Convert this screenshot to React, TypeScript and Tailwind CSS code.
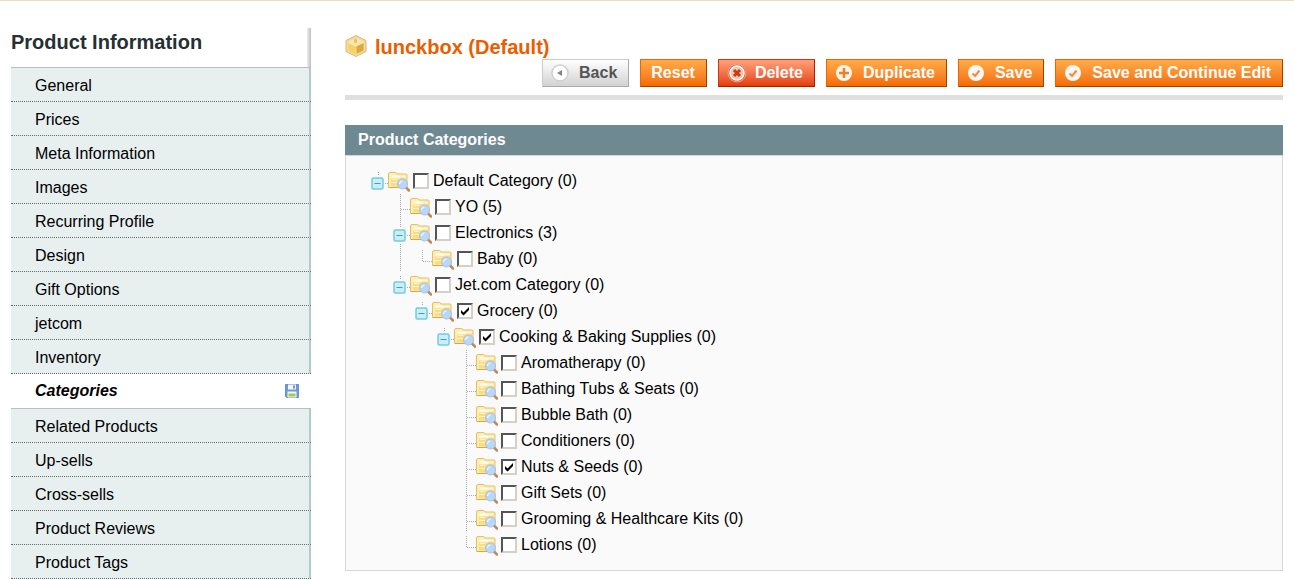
import React from "react";

const tabsBefore = [
    "General",
    "Prices",
    "Meta Information",
    "Images",
    "Recurring Profile",
    "Design",
    "Gift Options",
    "jetcom",
    "Inventory",
];

const tabsAfter = [
    "Related Products",
    "Up-sells",
    "Cross-sells",
    "Product Reviews",
    "Product Tags",
];

type Category = {
    name: string;
    checked?: boolean;
    children?: Category[];
};

const categories: Category = {
    name: "Default Category (0)",
    children: [
        { name: "YO (5)" },
        { name: "Electronics (3)", children: [{ name: "Baby (0)" }] },
        {
            name: "Jet.com Category (0)",
            children: [
                {
                    name: "Grocery (0)",
                    checked: true,
                    children: [
                        {
                            name: "Cooking & Baking Supplies (0)",
                            checked: true,
                            children: [
                                { name: "Aromatherapy (0)" },
                                { name: "Bathing Tubs & Seats (0)" },
                                { name: "Bubble Bath (0)" },
                                { name: "Conditioners (0)" },
                                { name: "Nuts & Seeds (0)", checked: true },
                                { name: "Gift Sets (0)" },
                                { name: "Grooming & Healthcare Kits (0)" },
                                { name: "Lotions (0)" },
                            ],
                        },
                    ],
                },
            ],
        },
    ],
};

const CubeIcon = () => (
    <svg width="22" height="22" viewBox="0 0 22 22" aria-hidden="true">
        <path
            d="M11 0.500 21 5.500v11L11 21.500 1 16.500v-11z"
            fill="#f0d9a2"
            stroke="#d9b978"
            strokeLinejoin="round"
        />
        <path d="M11 3 18 6.500 11 10 4 6.500z" fill="#fdeab0" />
        <path d="M3.500 7.500l7.500 3.500v8L3.500 15.500z" fill="#f7cf62" />
        <path d="M18.500 7.500L11 11v8l7.500-3.500z" fill="#dfa93a" />
        <path d="M3.500 7.500l7.500 3.500 7.500-3.500" fill="none" stroke="#fff4cf" />
        <path d="M9 4.500l3-1v4l-1.500 1-1.500-1z" fill="#eec15a" />
        <path d="M11 11v8" stroke="#f6dc93" />
    </svg>
);

const DiskIcon = () => (
    <svg width="14" height="14" viewBox="0 0 14 14" aria-hidden="true">
        <path d="M0.500 0.500h13v13h-12l-1-1z" fill="#7396d8" stroke="#6b8fd0" />
        <path d="M3 0.500h8v5H3z" fill="#f3f7fd" />
        <path d="M8 1.500h2v3H8z" fill="#6f93d6" />
        <path d="M2.500 7.500h9v6h-9z" fill="#f4f9ec" />
        <path d="M3.500 9.500h7v3h-7z" fill="#9bd057" />
    </svg>
);

const FolderIcon = () => (
    <svg width="22" height="22" viewBox="0 -2 22 22" aria-hidden="true" className="shrink-0">
        <path
            d="M0.500 15.500v-13.500q0-1.500 1.500-1.500h5.500q1 0 1.500 1.500h9q1 0 1 1v12.500z"
            fill="#fdeeb8"
            stroke="#e8bd62"
        />
        <path d="M3.500 4.500h7l1.500 1h5.500" fill="none" stroke="#fffdf0" strokeWidth="2" />
        <path d="M3 6.500h8l1-1h6v9H3z" fill="#fbdc80" />
        <path d="M4 7.500h5M3 10.500h7" stroke="#fff3c8" />
        <path d="M1 15.500h14" stroke="#e0a446" />
        <path d="M18 15.500l3 3" stroke="#c0895a" strokeWidth="2.500" strokeLinecap="round" />
        <circle cx="14.500" cy="12" r="5" fill="#b9d8f8" stroke="#a5bfe8" />
        <path d="M11.500 12q0-2.500 3-3" fill="none" stroke="#e4f1ff" strokeWidth="1.500" />
    </svg>
);

const lineProps = {
    stroke: "#a8a8a8",
    strokeDasharray: "1 1",
};

// Empty column under an ancestor, with its line if more siblings follow
const Spacer = ({ line }: { line: boolean }) => (
    <svg width="22" height="26" viewBox="0 0 22 26" aria-hidden="true" className="shrink-0">
        {line && <path d="M12.500 0v26" {...lineProps} />}
    </svg>
);

const Elbow = ({ last, open }: { last: boolean; open: boolean }) => (
    <svg width="22" height="26" viewBox="0 0 22 26" aria-hidden="true" className="shrink-0">
        <path d={last ? "M12.500 4v12" : "M12.500 0v26"} {...lineProps} />
        <path d="M13 15.500h9" {...lineProps} />
        {open && (
            <>
                <rect x="4" y="8" width="15" height="15" fill="#fafafa" />
                <rect
                    x="6"
                    y="10"
                    width="11"
                    height="11"
                    rx="1.500"
                    fill="#c9eef5"
                    stroke="#74cbdd"
                    strokeWidth="1.500"
                />
                <path d="M8.500 15.500h6" stroke="#3f9fb5" />
                <path d="M19 15.500h3" {...lineProps} />
            </>
        )}
    </svg>
);

type NodeProps = {
    node: Category;
    last: boolean;
    lines: boolean[];
};

const TreeNode: React.FC<NodeProps> = ({ node, last, lines }) => (
    <li>
        <div className="flex h-[26px] items-center">
            {lines.map((line, i) => (
                <Spacer key={i} line={line} />
            ))}
            <Elbow last={last} open={!!node.children} />
            <FolderIcon />
            <label className="flex items-center gap-1 pl-[3px] whitespace-nowrap">
                <span className="relative flex">
                    <input
                        type="checkbox"
                        defaultChecked={node.checked}
                        className="peer size-4 appearance-none border-2 border-t-[#555] border-r-[#d4d0c8] border-b-[#d4d0c8] border-l-[#555] bg-white"
                    />
                    <svg
                        width="16"
                        height="16"
                        viewBox="0 0 16 16"
                        aria-hidden="true"
                        className="pointer-events-none absolute inset-0 hidden peer-checked:block"
                    >
                        <path d="M4 7v3l2.500 2.500L12 7V4L6.500 9.500z" fill="#000" />
                    </svg>
                </span>
                {node.name}
            </label>
        </div>
        {node.children && (
            <ul>
                {node.children.map((child, i) => (
                    <TreeNode
                        key={child.name}
                        node={child}
                        last={i === node.children!.length - 1}
                        lines={[...lines, !last]}
                    />
                ))}
            </ul>
        )}
    </li>
);

const BackIcon = () => (
    <svg width="18" height="18" viewBox="0 0 18 18" aria-hidden="true">
        <circle cx="9" cy="9" r="8" fill="#fff" stroke="#cfcfcf" strokeWidth="1.500" />
        <path d="M11 6v6L6 9z" fill="#858585" />
    </svg>
);

const DeleteIcon = () => (
    <svg width="20" height="20" viewBox="0 0 20 20" aria-hidden="true" className="-mr-0.5">
        <circle cx="10" cy="10" r="9" fill="#e2623c" stroke="#f0a088" />
        <circle cx="10" cy="10" r="7" fill="#f9c3b0" stroke="#fff" strokeWidth="1.500" />
        <path d="M7 7l6 6M13 7l-6 6" stroke="#c93a16" strokeWidth="3" />
    </svg>
);

const PlusIcon = () => (
    <svg width="18" height="18" viewBox="0 0 18 18" aria-hidden="true">
        <circle cx="9" cy="9" r="8" fill="#fff6ea" />
        <path d="M9 4v10M4 9h10" stroke="#ee8128" strokeWidth="2.500" />
    </svg>
);

const CheckIcon = () => (
    <svg width="18" height="18" viewBox="0 0 18 18" aria-hidden="true">
        <circle cx="9" cy="9" r="8" fill="#fff8f0" />
        <path d="M5.500 9.500l2.500 2.500 4.500-5.500" fill="none" stroke="#f0894a" strokeWidth="2" />
    </svg>
);

const orange =
    "border-t-[#ed6502] border-r-[#a04300] border-b-[#a04300] border-l-[#ed6502] from-[#ffac47] to-[#f46b00] text-white";
const red =
    "border-t-[#d4330b] border-r-[#a92000] border-b-[#a92000] border-l-[#d4330b] from-[#ffa078] to-[#e33b00] text-white";
const gray =
    "border-t-[#ccc] border-r-[#aaa] border-b-[#aaa] border-l-[#ccc] from-white to-[#d2d2d2] text-[#555]";

type ActionProps = {
    label: string;
    color: string;
    icon?: React.ReactNode;
};

const Action: React.FC<ActionProps> = ({ label, color, icon }) => (
    <button
        type="button"
        className={`flex h-7 items-center border bg-linear-to-b pr-[11px] pb-px font-bold whitespace-nowrap ${icon ? "gap-[10px] pl-2" : "pl-[10px]"} ${color}`}
    >
        {icon}
        {label}
    </button>
);

const Tab = ({ label }: { label: string }) => (
    <li className="border-b border-dotted border-[#5f6b6b] bg-[#e7efef]">
        <a
            href="#"
            className="block h-[33px] border-r-2 border-[#b4c9c9] pl-6 leading-9 text-black"
        >
            {label}
        </a>
    </li>
);

export default function App() {
    return (
        <div className="border-t border-[#eadfb8] bg-white font-['Liberation_Sans',Arial,sans-serif] text-base text-black">
            <div className="flex gap-[34px] pr-[11px] pl-[11px]">
                {/* Left tabs */}
                <aside className="w-[300px] shrink-0 pt-[27px]">
                    <div className="flex h-[39px] justify-between">
                        <h3 className="text-xl leading-7 font-bold text-[#253033]">
                            Product Information
                        </h3>
                        <div className="w-1 bg-linear-to-r from-[#f0f0f0] to-[#bdbdbd]" />
                    </div>
                    <ul className="border-t border-[#b8bfbf]">
                        {tabsBefore.map((tab) => (
                            <Tab key={tab} label={tab} />
                        ))}
                        <li className="border-b border-[#bebebe]">
                            <a
                                href="#"
                                className="flex h-[34px] items-center justify-between pr-3 pl-6 leading-9 font-bold italic"
                            >
                                Categories
                                <DiskIcon />
                            </a>
                        </li>
                        {tabsAfter.map((tab) => (
                            <Tab key={tab} label={tab} />
                        ))}
                    </ul>
                </aside>

                {/* Product form */}
                <main className="min-w-0 flex-1 pt-[34px]">
                    <header className="mb-[25px] border-b-[5px] border-[#dfdfdf] pb-2">
                        <div className="flex h-6 gap-2">
                            <CubeIcon />
                            <h2 className="text-xl leading-6 font-bold text-[#eb5e00]">
                                lunckbox (Default)
                            </h2>
                        </div>
                        <div className="flex justify-end gap-[11px]">
                            <Action label="Back" color={gray} icon={<BackIcon />} />
                            <Action label="Reset" color={orange} />
                            <Action label="Delete" color={red} icon={<DeleteIcon />} />
                            <Action label="Duplicate" color={orange} icon={<PlusIcon />} />
                            <Action label="Save" color={orange} icon={<CheckIcon />} />
                            <Action
                                label="Save and Continue Edit"
                                color={orange}
                                icon={<CheckIcon />}
                            />
                        </div>
                    </header>

                    <h4 className="bg-[#6f8992] pl-[13px] leading-[30px] font-bold text-white">
                        Product Categories
                    </h4>
                    <fieldset className="border border-[#d6d6d6] bg-[#fafafa] py-3 pl-5">
                        <ul>
                            <TreeNode node={categories} last lines={[]} />
                        </ul>
                    </fieldset>
                </main>
            </div>
        </div>
    );
}
